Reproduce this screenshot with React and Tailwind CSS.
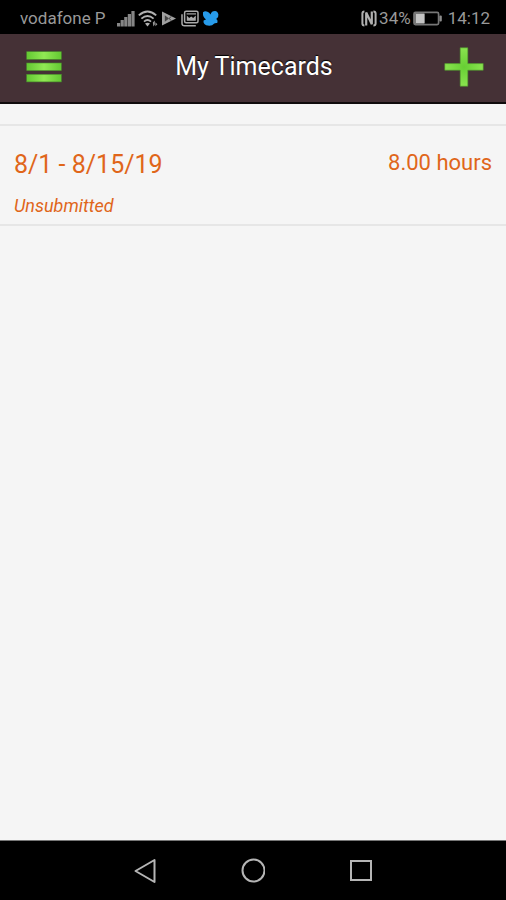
function SignalIcon() {
  return (
    <svg width="18" height="17" viewBox="0 0 18 17" fill="#868686" aria-hidden="true">
      <rect x="0" y="13" width="3.2" height="3.5" />
      <rect x="3.6" y="10" width="3.2" height="6.5" />
      <rect x="7.2" y="7" width="3.2" height="9.5" />
      <rect x="10.8" y="4" width="3.2" height="12.5" />
      <rect x="14.4" y="1" width="3.2" height="15.5" />
    </svg>
  );
}

function WifiIcon() {
  return (
    <svg width="20" height="17" viewBox="0 0 20 17" fill="none" stroke="#b0b0b0" strokeWidth="1.9" aria-hidden="true">
      <path d="M.8 5.4Q9.5 -2.4 18.2 5.4" />
      <path d="M3.4 8.6Q9.5 3.2 15.6 8.6" />
      <path d="M6 11.6Q9.5 8.6 13 11.6" />
      <path d="M7 13.6Q9.5 12 12 13.6L9.5 16.6Z" fill="#b0b0b0" stroke="none" />
      <path d="M14.8 12.6L16.8 10.4V14.6L15.4 16.6ZM17.4 12.2L19.4 14.2L17.4 16.2Z" fill="#999" stroke="none" />
    </svg>
  );
}

function PlayIcon() {
  return (
    <svg width="17" height="17" viewBox="0 0 17 17" aria-hidden="true">
      <path d="M1 1.5V15.5L15 8.5Z" fill="#a0a0a0" />
      <path d="M3.8 5.2L8 8.5L3.8 11.8Z" fill="#444" />
      <path d="M8 8.5L10.6 6.2M8 8.5L10.6 10.8" fill="none" stroke="#444" strokeWidth="1" />
    </svg>
  );
}

function GalleryIcon() {
  return (
    <svg width="18" height="17" viewBox="0 0 18 17" fill="none" stroke="#aaa" strokeWidth="1.5" aria-hidden="true">
      <rect x="3.6" y="1.2" width="13.4" height="11.6" rx="1.5" />
      <path d="M1 4.2V13.5Q1 15.8 3.5 15.8H14.8" />
      <path d="M5.8 10.8V5.4L8.2 8L10.2 6.4L12.2 8L14.8 5.4V10.8Z" fill="#aaa" stroke="none" />
      <path d="M5.6 3.9H15" strokeWidth="1.2" />
    </svg>
  );
}

function BirdIcon() {
  return (
    <svg width="17" height="17" viewBox="0 0 17 17" fill="#279bea" aria-hidden="true">
      <path d="M1 2.2Q3.2 .3 6 2.1Q7.5 3 8.5 4.4Q9.5 1 13 1Q15.7 1.2 16.4 4.4Q16.9 7 14.2 9Q16.2 10.2 15.2 13Q12.8 12.8 12 13.8Q10.5 15.8 7.3 15.8Q3.5 15.8 2.4 14Q1 12.5 1.6 10.6L4 9.4Q.5 7 1 2.2Z" />
    </svg>
  );
}

function NfcIcon() {
  return (
    <svg width="16" height="17" viewBox="0 0 16 17" fill="none" stroke="#b0b0b0" aria-hidden="true">
      <path d="M3.4 1.6Q1.4 1.6 1.4 3.6V13.4Q1.4 15.4 3.4 15.4" strokeWidth="2" />
      <path d="M12.4 1.6Q14.6 1.6 14.6 3.6V13.4Q14.6 15.4 12.4 15.4" strokeWidth="2" />
      <path d="M5.2 15.6V2.6L10.8 14.2V1.4" strokeWidth="2.2" />
    </svg>
  );
}

function BatteryIcon() {
  return (
    <svg width="29" height="15" viewBox="0 0 29 15" aria-hidden="true">
      <rect x="1" y="1.4" width="24.6" height="12.2" rx="1.5" fill="none" stroke="#777" strokeWidth="1.7" />
      <rect x="1" y="1.4" width="10.5" height="12.2" rx="1" fill="#777" />
      <rect x="3" y="3" width="8.5" height="9" fill="#c4c4c4" />
      <rect x="26.4" y="4.5" width="2.4" height="6" rx="1" fill="#8d8d8d" />
    </svg>
  );
}

function MenuIcon() {
  return (
    <svg width="36" height="32" viewBox="0 0 36 32" aria-hidden="true">
      <defs>
        <linearGradient id="bar">
          <stop offset="0" stopColor="#63c832" />
          <stop offset=".5" stopColor="#91e854" />
          <stop offset="1" stopColor="#63c832" />
        </linearGradient>
      </defs>
      <g fill="url(#bar)" stroke="#498f2b" strokeWidth=".6">
        <rect x=".7" y=".7" width="34.6" height="7.6" />
        <rect x=".7" y="12" width="34.6" height="7.6" />
        <rect x=".7" y="23.3" width="34.6" height="7.6" />
      </g>
    </svg>
  );
}

function PlusIcon() {
  return (
    <svg width="40" height="40" viewBox="0 0 40 40" aria-hidden="true">
      <defs>
        <radialGradient id="plus">
          <stop offset="0" stopColor="#67cf34" />
          <stop offset="1" stopColor="#8ae34f" />
        </radialGradient>
      </defs>
      <path d="M16.2 .8H23.8V16.6H39.2V23.2H23.8V39.2H16.2V23.2H.8V16.6H16.2Z" fill="url(#plus)" stroke="#4d992b" strokeWidth=".6" />
    </svg>
  );
}

export default function App() {
  return (
    <div className="flex min-h-screen flex-col bg-[#f5f5f5] font-[Roboto,sans-serif]">
      <div className="flex h-[34px] items-center justify-between bg-black pt-0.5 pr-4 pl-5 text-[17px] leading-5 text-[#999]">
        <div className="flex items-center gap-[3px]">
          <span className="mr-2">vodafone P</span>
          <SignalIcon />
          <WifiIcon />
          <PlayIcon />
          <GalleryIcon />
          <BirdIcon />
        </div>
        <div className="flex items-center gap-0.5">
          <NfcIcon />
          <span>34%</span>
          <BatteryIcon />
          <span className="ml-1">14:12</span>
        </div>
      </div>

      <header className="flex h-[70px] items-center justify-between border-b-2 border-[#100c0d] bg-[#453136] pr-[22px] pb-[3px] pl-6">
        <button type="button" aria-label="Menu" className="flex w-10 items-center justify-center">
          <MenuIcon />
        </button>
        <h1 className="text-[25px] leading-8 text-white [text-shadow:0_-1px_1px_#000]">My Timecards</h1>
        <button type="button" aria-label="Add timecard" className="flex w-10 items-center justify-center">
          <PlusIcon />
        </button>
      </header>

      <main className="flex-1 pt-5">
        <ul className="border-y-2 border-[#e6e6e6] text-[#e0661a]">
          <li className="px-[14px] pt-6 pb-1.5">
            <div className="flex items-start justify-between">
              <h2 className="text-[25px] leading-[30px]">8/1 - 8/15/19</h2>
              <span className="text-[22px] leading-[26px]">8.00 hours</span>
            </div>
            <p className="mt-3.5 text-[18px] leading-6 italic">Unsubmitted</p>
          </li>
        </ul>
      </main>

      <nav className="flex h-[60px] items-center justify-center gap-[84px] border-t border-[#777] bg-black">
        <button type="button" aria-label="Back">
          <svg width="24" height="26" viewBox="0 0 24 26" fill="none" stroke="#b5b5b5" strokeWidth="2" strokeLinejoin="round">
            <path d="M2.5 13L21.5 2V24Z" />
          </svg>
        </button>
        <button type="button" aria-label="Home">
          <svg width="24" height="26" viewBox="0 0 24 26" fill="none" stroke="#b5b5b5" strokeWidth="2">
            <circle cx="12.5" cy="12.5" r="11" />
          </svg>
        </button>
        <button type="button" aria-label="Recent apps">
          <svg width="24" height="26" viewBox="0 0 24 26" fill="none" stroke="#b5b5b5" strokeWidth="2">
            <rect x="2" y="3" width="20" height="19" />
          </svg>
        </button>
      </nav>
    </div>
  );
}
